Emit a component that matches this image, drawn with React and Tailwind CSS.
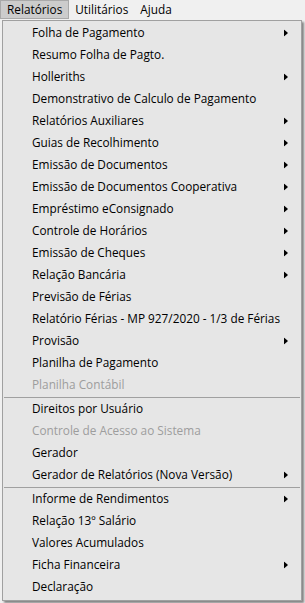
import React from "react";

const groups = [
  [
    ["Folha de Pagamento", true],
    ["Resumo Folha de Pagto."],
    ["Holleriths", true],
    ["Demonstrativo de Calculo de Pagamento"],
    ["Relatórios Auxiliares", true],
    ["Guias de Recolhimento", true],
    ["Emissão de Documentos", true],
    ["Emissão de Documentos Cooperativa", true],
    ["Empréstimo eConsignado", true],
    ["Controle de Horários", true],
    ["Emissão de Cheques", true],
    ["Relação Bancária", true],
    ["Previsão de Férias"],
    ["Relatório Férias - MP 927/2020 - 1/3 de Férias"],
    ["Provisão", true],
    ["Planilha de Pagamento"],
    ["Planilha Contábil", false, true],
  ],
  [
    ["Direitos por Usuário"],
    ["Controle de Acesso ao Sistema", false, true],
    ["Gerador"],
    ["Gerador de Relatórios (Nova Versão)", true],
  ],
  [
    ["Informe de Rendimentos", true],
    ["Relação 13º Salário"],
    ["Valores Acumulados"],
    ["Ficha Financeira", true],
    ["Declaração"],
  ],
];

function Arrow() {
  return (
    <svg width="4" height="7" viewBox="0 0 4 7" className="absolute right-[13px] top-1/2 -translate-y-1/2">
      <path d="M0 0 L4 3.5 L0 7 Z" fill="#000" />
    </svg>
  );
}

function Item({ label, sub, disabled }) {
  return (
    <div
      className={`relative h-[22px] flex items-center pl-[29px] whitespace-nowrap ${
        disabled ? "text-[#9d9d9d]" : "text-black"
      }`}
    >
      {label}
      {sub && <Arrow />}
    </div>
  );
}

export default function App() {
  return (
    <div
      className="w-[305px] h-[603px] bg-[#f0f0f0] overflow-hidden text-[11.8px] leading-none"
      style={{ fontFamily: '"Open Sans", "Noto Sans", sans-serif' }}
    >
      <div className="h-[20px] flex items-start bg-[#f0f0f0]">
        <div className="h-[19px] px-[6px] flex items-center bg-[#cccccc] border border-[#a9a9a9]">
          Relatórios
        </div>
        <div className="h-[19px] px-[6px] flex items-center">Utilitários</div>
        <div className="h-[19px] px-[6px] flex items-center">Ajuda</div>
      </div>
      <div className="flex">
        <div className="ml-[2px] w-[300px] bg-[#e6e6e6] border border-[#a0a0a0] pt-[1px] pb-[2px] shadow-[2px_2px_2px_rgba(0,0,0,0.45)]">
          {groups.map((g, gi) => (
            <div key={gi}>
              {gi > 0 && (
                <div className="h-[2px] flex items-center px-[1px]">
                  <div className="h-px w-full bg-[#a0a0a0]" />
                </div>
              )}
              {g.map(([label, sub, disabled]) => (
                <Item key={label} label={label} sub={sub} disabled={disabled} />
              ))}
            </div>
          ))}
        </div>
      </div>
    </div>
  );
}
